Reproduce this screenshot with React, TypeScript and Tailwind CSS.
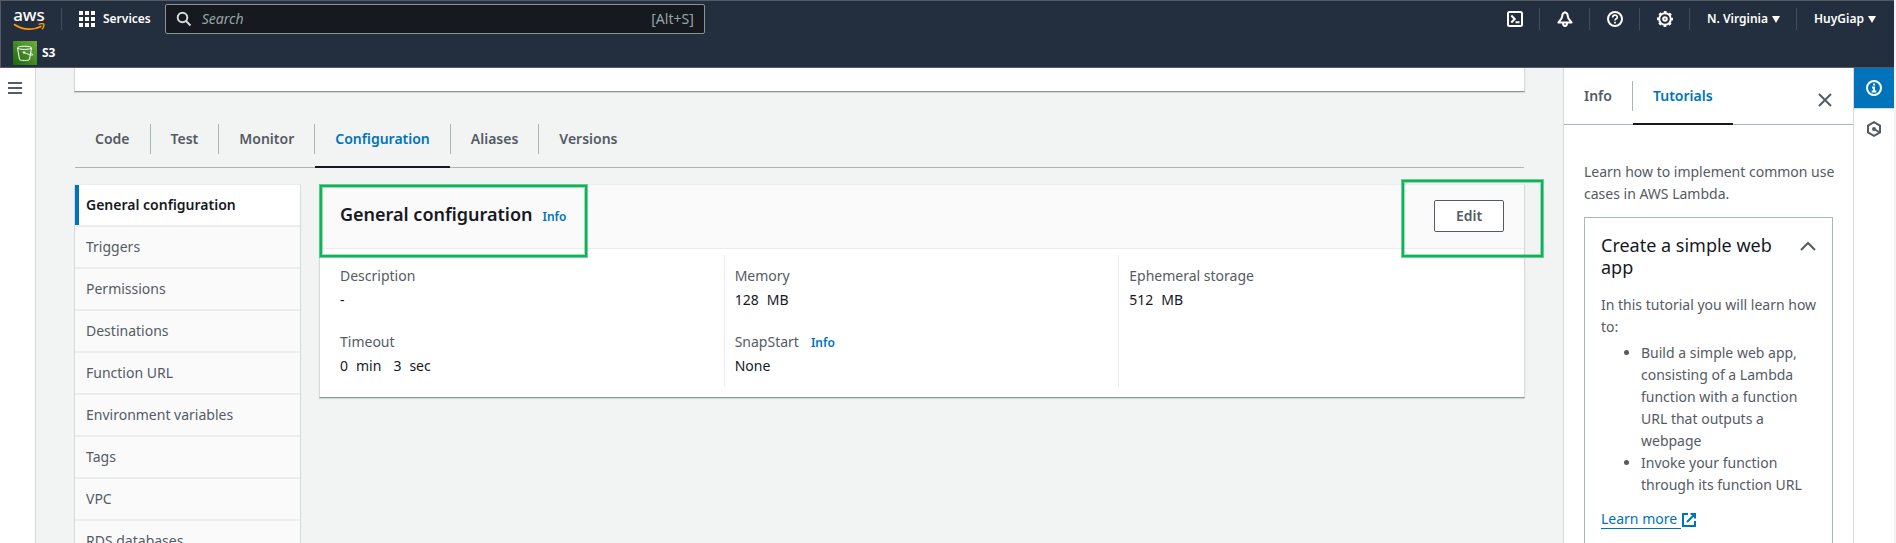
import type { ReactNode } from "react";

const tabs = ["Code", "Test", "Monitor", "Configuration", "Aliases", "Versions"];

const sections = [
  "General configuration",
  "Triggers",
  "Permissions",
  "Destinations",
  "Function URL",
  "Environment variables",
  "Tags",
  "VPC",
  "RDS databases",
];

function Icon({ children, className = "" }: { children: ReactNode; className?: string }) {
  return (
    <svg
      viewBox="0 0 16 16"
      className={`size-4 shrink-0 ${className}`}
      fill="none"
      stroke="currentColor"
      strokeWidth="2"
      aria-hidden="true"
    >
      {children}
    </svg>
  );
}

function Caret() {
  return (
    <svg viewBox="0 0 8 7" className="h-[7px] w-2" fill="currentColor" aria-hidden="true">
      <path d="M0 0h8L4 7z" />
    </svg>
  );
}

function Divider() {
  return <span className="mr-px h-[22px] w-px shrink-0 bg-[#414d5c]" />;
}

function AwsLogo() {
  return (
    <a href="#home" aria-label="AWS home" className="flex w-8 flex-col items-center">
      <span className="h-4 text-[17px] leading-4 font-medium text-white">aws</span>
      <svg viewBox="0 0 32 8" className="h-2 w-8" fill="none" stroke="#ff9900" aria-hidden="true">
        <path d="M1 1.2C9 6.8 20 7.8 28.5 3.2" strokeWidth="1.8" />
        <path d="M25.6 1.4C28 .6 30 .5 30.8 1.1 31.3 2 30.6 4.6 29 6.2" strokeWidth="1.4" />
      </svg>
    </a>
  );
}

function BucketIcon() {
  return (
    <svg viewBox="0 0 24 24" className="size-6" fill="none" stroke="white" aria-hidden="true">
      <defs>
        <linearGradient id="bucket" x1="0" y1="1" x2="1" y2="0">
          <stop offset="0" stopColor="#1b660f" />
          <stop offset="1" stopColor="#6cae3e" />
        </linearGradient>
      </defs>
      <path d="M0 0h24v24H0z" fill="url(#bucket)" stroke="none" />
      <ellipse cx="11.5" cy="6.8" rx="7" ry="1.6" />
      <path d="M4.5 7l2 11.5c.3 1.3 9.7 1.3 10 0L18.500 7" />
      <path d="M11 11.500c3 1.200 8 3.400 8.700 2.400.4-.7-1-1.400-2-1.900" />
      <circle cx="11" cy="11.500" r=".8" fill="white" />
    </svg>
  );
}

function Header() {
  return (
    <header className="mr-0.5 h-17 shrink-0 border-y border-l border-[#545b64] bg-[#232f3e] text-white">
      <div className="flex h-9 items-center pr-[18px] pl-3">
        <AwsLogo />
        <span className="ml-4 flex">
          <Divider />
        </span>
        <button type="button" className="ml-4 flex items-center gap-2 text-xs font-semibold">
          <svg viewBox="0 0 16 16" className="size-4" fill="currentColor" aria-hidden="true">
            {[0, 6, 12].map((y) => [0, 6, 12].map((x) => <rect key={`${x}-${y}`} x={x} y={y} width="4" height="4" />))}
          </svg>
          <span>Services</span>
        </button>
        <div className="ml-3.5 flex h-[30px] w-[540px] items-center gap-2.5 rounded-xs border border-[#879596] bg-[#16191f] px-2.5">
          <Icon className="text-[#d5dbdb]">
            <circle cx="6.500" cy="6.500" r="4.800" />
            <path d="M10 10l4.500 4.500" />
          </Icon>
          <input
            type="search"
            aria-label="Search services"
            placeholder="Search"
            className="h-7 min-w-0 flex-1 bg-transparent text-sm leading-7 outline-none placeholder:text-[#95a5a6] placeholder:italic"
          />
          <span className="text-sm text-[#95a5a6]">[Alt+S]</span>
        </div>
        <div className="ml-auto flex items-center gap-4">
          <button type="button" aria-label="CloudShell">
            <Icon>
              <rect x="1" y="1" width="14" height="14" rx="1.500" />
              <path d="M4.300 4.500l3.400 3.500-3.400 3.500M8.500 11.300h4" />
            </Icon>
          </button>
          <Divider />
          <button type="button" aria-label="Notifications">
            <Icon>
              <path
                d="M8 1.200C6 1.700 5.200 3 5.200 5.300 4.900 8.300 2.400 9.600 1.400 11.500h13.200C13.600 9.600 11.100 8.300 10.800 5.300 10.800 3 10 1.700 8 1.200z"
                strokeLinejoin="round"
              />
              <path d="M6 12c0 4 4 4 4 0" />
            </Icon>
          </button>
          <Divider />
          <button type="button" aria-label="Help">
            <Icon>
              <circle cx="8" cy="8" r="7" />
              <path d="M5.700 6.400C5.700 3.400 10.300 3.500 10.300 6.200 10.300 7.900 8 7.600 8 9.600M8 10.800v1.700" strokeWidth="1.700" />
            </Icon>
          </button>
          <Divider />
          <button type="button" aria-label="Settings">
            <Icon>
              <circle cx="8" cy="8" r="5.800" />
              <circle cx="8" cy="8" r="7" strokeDasharray="2.750 2.750" strokeDashoffset="1.370" />
              <circle cx="8" cy="8" r="1.800" />
            </Icon>
          </button>
          <Divider />
          <button type="button" className="flex items-center gap-1 text-xs font-semibold">
            N. Virginia <Caret />
          </button>
          <Divider />
          <button type="button" className="flex items-center gap-1 text-xs font-semibold">
            HuyGiap <Caret />
          </button>
        </div>
      </div>
      <a href="#s3" className="mt-1 flex h-6 w-fit items-center gap-[5px] pl-3 text-xs font-bold">
        <BucketIcon />
        S3
      </a>
    </header>
  );
}

function TabBar({ items, active, className = "" }: { items: string[]; active: string; className?: string }) {
  return (
    <div role="tablist" className={`flex border-b border-[#aab7b8] ${className}`}>
      {items.map((item, i) => (
        <div key={item} className="-mb-px flex items-start">
          {i > 0 && <span className="h-[30px] w-px bg-[#aab7b8]" />}
          <button
            type="button"
            role="tab"
            aria-selected={item === active}
            className={`h-11 border-b-2 px-5 pb-3 text-sm leading-[30px] font-semibold ${
              item === active ? "border-[#16191f] text-[#0073bb]" : "border-transparent text-[#545b64]"
            }`}
          >
            {item}
          </button>
        </div>
      ))}
    </div>
  );
}

function Field({ label, info, children }: { label: string; info?: boolean; children: ReactNode }) {
  return (
    <div>
      <dt className="flex items-baseline gap-3 leading-[22px] text-[#545b64]">
        {label}
        {info && (
          <a href="#snapstart" className="text-xs font-semibold text-[#0073bb]">
            Info
          </a>
        )}
      </dt>
      <dd className="mt-0.5 flex gap-2 leading-[22px] text-[#16191f]">{children}</dd>
    </div>
  );
}

function Highlight({ className }: { className: string }) {
  return (
    <span
      className={`pointer-events-none absolute border-2 border-[#0db457] shadow-[0_0_0_1px_#0db45799,inset_0_0_0_1px_#0db45766] ${className}`}
    />
  );
}

function ConfigCard() {
  return (
    <section className="relative min-w-0 flex-1 border-x border-t border-b border-x-[#d5dbdb] border-t-[#eaeded] border-b-[#879596] bg-white shadow-[0_1px_1px_#d5dbdb]">
      <div className="flex h-16 items-start justify-between border-b border-[#eaeded] bg-[#fafafa] px-5 pt-[15px]">
        <h2 className="flex items-baseline gap-2.5 text-lg leading-7 font-semibold text-[#16191f]">
          General configuration
          <a href="#general" className="text-xs leading-4 text-[#0073bb]">
            Info
          </a>
        </h2>
        <button
          type="button"
          className="h-8 w-[70px] rounded-xs border border-[#545b64] bg-white text-sm font-semibold text-[#545b64]"
        >
          Edit
        </button>
      </div>
      <dl className="grid grid-cols-3 divide-x divide-[#eaeded] px-2.5 pt-1.5 pb-2.5">
        <div className="flex flex-col gap-5 p-2.5">
          <Field label="Description">-</Field>
          <Field label="Timeout">
            <span>0</span>
            <span>min</span>
            <span className="pl-1">3</span>
            <span>sec</span>
          </Field>
        </div>
        <div className="flex flex-col gap-5 p-2.5">
          <Field label="Memory">
            <span>128</span>
            <span>MB</span>
          </Field>
          <Field label="SnapStart" info>
            None
          </Field>
        </div>
        <div className="flex flex-col gap-5 p-2.5">
          <Field label="Ephemeral storage">
            <span>512</span>
            <span>MB</span>
          </Field>
        </div>
      </dl>
      <Highlight className="top-0 left-0 h-18 w-[267px]" />
      <Highlight className="-top-[5px] -right-[19px] h-[77px] w-[141px]" />
    </section>
  );
}

function HelpPanel() {
  return (
    <aside className="flex w-[290px] shrink-0 flex-col border-l border-[#d5dbdb] bg-white text-[#545b64]">
      <div className="relative">
        <TabBar items={["Info", "Tutorials"]} active="Tutorials" className="pt-[13px]" />
        <button type="button" aria-label="Close" className="absolute top-6 right-5">
          <Icon className="text-[#545b64]">
            <path d="M2 2l12 12M14 2L2 14" />
          </Icon>
        </button>
      </div>
      <div className="px-5 pt-9 text-sm leading-[22px]">
        <p className="-mr-4">Learn how to implement common use cases in AWS Lambda.</p>
        <article className="mt-3 h-[400px] border border-[#aab7b8] px-4 pt-4">
          <div className="flex items-start justify-between gap-4">
            <h3 className="text-lg leading-[22px] text-[#16191f]">Create a simple web app</h3>
            <button type="button" aria-label="Collapse" className="pt-1">
              <Icon>
                <path d="M1 12l7-7 7 7" />
              </Icon>
            </button>
          </div>
          <p className="-mr-2 mt-4">In this tutorial you will learn how to:</p>
          <ul className="mt-1 list-disc pl-10">
            <li>Build a simple web app, consisting of a Lambda function with a function URL that outputs a webpage</li>
            <li>Invoke your function through its function URL</li>
          </ul>
          <a href="#learn" className="mt-3.5 flex w-fit items-center text-[#0073bb]">
            <span className="border-b border-[#0073bb] pr-1 leading-[18px]">Learn more</span>
            <Icon>
              <path d="M7 2H2v12h12V9M9.500 2H14v4.500M14 2L6 10" />
            </Icon>
          </a>
        </article>
      </div>
    </aside>
  );
}

export default function App() {
  return (
    <div className="flex h-screen flex-col overflow-hidden bg-[#f2f3f3] font-['Noto_Sans',sans-serif] text-sm">
      <Header />
      <div className="flex min-h-0 flex-1">
        <nav className="w-9 shrink-0 border-r border-[#d5dbdb] bg-white pt-3 pl-[7px]">
          <button type="button" aria-label="Open navigation">
            <Icon className="text-[#545b64]">
              <path d="M1 3h14M1 8h14M1 13h14" />
            </Icon>
          </button>
        </nav>
        <main className="min-w-0 flex-1 px-[38px]">
          <div className="h-6 border-x border-b border-x-[#d5dbdb] border-b-[#879596] bg-white shadow-[0_1px_1px_#d5dbdb]" />
          <TabBar items={tabs} active="Configuration" className="mx-px mt-8" />
          <div className="mt-4 flex items-start gap-[18px]">
            <ul className="w-[227px] shrink-0 border-x border-t border-x-[#d5dbdb] border-t-[#eaeded] bg-[#fafafa] text-[#545b64]">
              {sections.map((section, i) => (
                <li key={section} className="border-b-2 border-[#eaeded]">
                  <a
                    href="#section"
                    className={`block h-10 truncate leading-10 ${
                      i === 0 ? "border-l-4 border-[#0073bb] bg-white pl-[7px] font-semibold text-[#16191f]" : "pl-[11px]"
                    }`}
                  >
                    {section}
                  </a>
                </li>
              ))}
            </ul>
            <ConfigCard />
          </div>
        </main>
        <HelpPanel />
        <div className="mr-0.5 flex w-[41px] shrink-0 flex-col border-l border-[#d5dbdb] bg-white">
          <button type="button" aria-label="Info panel" className="flex h-10 items-center justify-center bg-[#0073bb] text-white">
            <Icon>
              <circle cx="8" cy="8" r="7" />
              <path d="M8 3.500v2M6 7.500h2v4M5.700 11.500h4.600" strokeWidth="1.800" />
            </Icon>
          </button>
          <button type="button" aria-label="Tutorials panel" className="flex h-10 items-center justify-center border-t border-[#d5dbdb] text-[#545b64]">
            <Icon>
              <path d="M8 1.200l6 3.400v6.800l-6 3.400-6-3.400V4.600z" />
              <circle cx="8" cy="8" r="2" fill="currentColor" stroke="none" />
              <path d="M8 8l5 3" />
            </Icon>
          </button>
        </div>
      </div>
    </div>
  );
}
